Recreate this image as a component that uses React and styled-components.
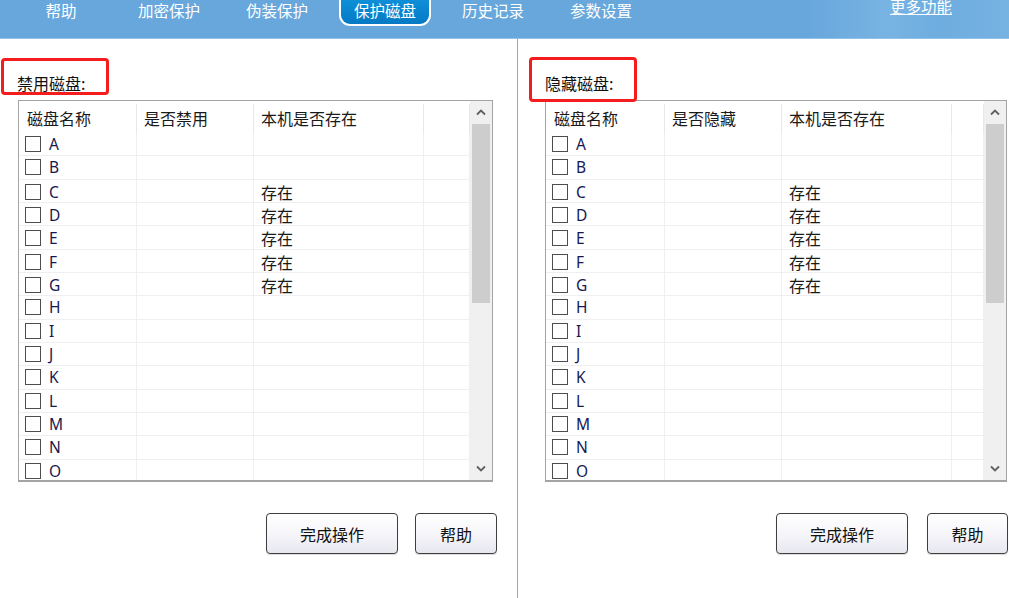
import React from "react";
import styled, { createGlobalStyle } from "styled-components";

const Global = createGlobalStyle`
  html, body { margin: 0; padding: 0; background: #fff; }
  body { font-family: "Noto Sans CJK SC", "Noto Sans", sans-serif; }
  * { box-sizing: border-box; }
`;

const Root = styled.div`
  width: 1009px;
  height: 598px;
  display: flex;
  flex-direction: column;
  overflow: hidden;
  background: #fff;
`;

const TopBar = styled.div`
  height: 39px;
  flex: none;
  display: flex;
  align-items: flex-start;
  padding-left: 7px;
  background: linear-gradient(90deg, #68a7dc 0%, #68a7dc 80%, #78b4e3 88%, #6eaddf 93%, #76b2e2 100%);
  border-bottom: 1px solid #93c2e8;
`;

const NavItem = styled.div`
  width: 108px;
  display: flex;
  justify-content: center;
`;

const NavLabel = styled.span`
  color: #fff;
  font-size: 15.5px;
  line-height: 20px;
  white-space: nowrap;
  ${(p) =>
    p.$active
      ? `
    padding: 0 13px 4px;
    background: linear-gradient(180deg, #0e8fd8 0%, #0579c4 100%);
    border: 2px solid #fff;
    border-top: none;
    border-radius: 0 0 11px 11px;
  `
      : ""}
`;

const MoreLink = styled.span`
  margin-left: auto;
  margin-right: 57px;
  margin-top: -4px;
  color: #fff;
  font-size: 15.5px;
  line-height: 20px;
  text-decoration: underline;
  text-underline-offset: 1px;
`;

const Main = styled.div`
  flex: 1;
  display: flex;
`;

const Panel = styled.div`
  position: relative;
  width: ${(p) => p.$width};
  flex: none;
  display: flex;
  flex-direction: column;
  padding-top: 34px;
  padding-left: ${(p) => p.$padLeft}px;
  border-right: ${(p) => (p.$divider ? "1px solid #a5a5a5" : "none")};
`;

const Highlight = styled.div`
  position: absolute;
  left: ${(p) => p.$left}px;
  top: ${(p) => p.$top}px;
  width: 108px;
  height: ${(p) => p.$height}px;
  border: 3px solid #f41c1c;
  border-radius: 4px;
  pointer-events: none;
`;

const SectionLabel = styled.div`
  font-size: 16px;
  line-height: 20px;
  color: #111;
  height: 20px;
  margin-bottom: 7px;
  margin-left: ${(p) => p.$shift || 0}px;
`;

const TableBox = styled.div`
  width: ${(p) => p.$width}px;
  height: 382px;
  border: 1px solid #a3a3a3;
  border-bottom-width: 2px;
  display: flex;
  overflow: hidden;
`;

const TableBody = styled.div`
  flex: 1;
  overflow: hidden;
`;

const Row = styled.div`
  display: grid;
  grid-template-columns: ${(p) => p.$cols};
  height: ${(p) => (p.$header ? "32px" : "23.33px")};
  border-bottom: ${(p) => (p.$header ? "none" : "1px solid #efefef")};
`;

const HeadCell = styled.div`
  display: flex;
  align-items: center;
  padding-left: ${(p) => p.$pad || 7}px;
  padding-top: 2px;
  font-size: 16px;
  color: #1a1a1a;
  position: relative;
  &::after {
    content: "";
    position: absolute;
    right: 0;
    top: 3px;
    bottom: 0;
    width: 1px;
    background: #e8e8e8;
  }
`;

const Cell = styled.div`
  display: flex;
  align-items: center;
  padding-left: ${(p) => p.$pad || 7}px;
  border-right: 1px solid #efefef;
  font-size: 16px;
  color: #1a1a1a;
  gap: 8px;
`;

const Check = styled.span`
  width: 16px;
  height: 16px;
  border: 1.5px solid #4d4d4d;
  background: #fff;
  flex: none;
`;

const Letter = styled.span`
  font-family: "Noto Sans", "Open Sans", sans-serif;
  font-size: 15.5px;
  color: #181850;
`;

const ScrollBar = styled.div`
  width: 22px;
  flex: none;
  background: #f0f0f0;
  display: flex;
  flex-direction: column;
  align-items: center;
`;

const ScrollArrow = styled.div`
  height: 23px;
  width: 100%;
  display: flex;
  align-items: center;
  justify-content: center;
  flex: none;
`;

const Thumb = styled.div`
  width: 18px;
  height: 179px;
  background: #cdcdcd;
  flex: none;
`;

const Spacer = styled.div`
  flex: 1;
`;

const ButtonRow = styled.div`
  display: flex;
  gap: ${(p) => p.$gap}px;
  margin-top: 31px;
  padding-left: ${(p) => p.$offset}px;
`;

const Button = styled.button`
  width: ${(p) => p.$w}px;
  height: 41px;
  border: 1px solid #3e3e3e;
  border-radius: 4px;
  background: linear-gradient(180deg, #ffffff 0%, #f6f6fa 50%, #e7e7ef 100%);
  font-family: "Noto Sans CJK SC", sans-serif;
  font-size: 16px;
  color: #111;
  padding: 0;
  box-shadow: 0 1px 1px rgba(0, 0, 0, 0.15);
`;

const Chevron = ({ down }) => (
  <svg width="10" height="7" viewBox="0 0 10 7">
    <path
      d={down ? "M1 1.5 L5 5.5 L9 1.5" : "M1 5.5 L5 1.5 L9 5.5"}
      fill="none"
      stroke="#606060"
      strokeWidth="1.8"
    />
  </svg>
);

const LETTERS = "ABCDEFGHIJKLMNO".split("");
const EXISTS = new Set(["C", "D", "E", "F", "G"]);

function DiskTable({ width, cols, flagTitle, firstPad }) {
  return (
    <TableBox $width={width}>
      <TableBody>
        <Row $header $cols={cols}>
          <HeadCell $pad={firstPad + 2}>磁盘名称</HeadCell>
          <HeadCell>{flagTitle}</HeadCell>
          <HeadCell>本机是否存在</HeadCell>
          <HeadCell />
        </Row>
        {LETTERS.map((l) => (
          <Row key={l} $cols={cols}>
            <Cell $pad={firstPad}>
              <Check />
              <Letter>{l}</Letter>
            </Cell>
            <Cell />
            <Cell>{EXISTS.has(l) ? "存在" : ""}</Cell>
            <Cell />
          </Row>
        ))}
      </TableBody>
      <ScrollBar>
        <ScrollArrow>
          <Chevron />
        </ScrollArrow>
        <Thumb />
        <Spacer />
        <ScrollArrow>
          <Chevron down />
        </ScrollArrow>
      </ScrollBar>
    </TableBox>
  );
}

const NAV = ["帮助", "加密保护", "伪装保护", "保护磁盘", "历史记录", "参数设置"];

export default function App() {
  return (
    <Root>
      <Global />
      <TopBar>
        {NAV.map((n) => (
          <NavItem key={n}>
            <NavLabel $active={n === "保护磁盘"}>{n}</NavLabel>
          </NavItem>
        ))}
        <MoreLink>更多功能</MoreLink>
      </TopBar>
      <Main>
        <Panel $width="518px" $padLeft={18} $divider>
          <Highlight $left={1} $top={19} $height={37} />
          <SectionLabel $shift={-1}>禁用磁盘:</SectionLabel>
          <DiskTable width={475} cols="118px 117px 170px 1fr" flagTitle="是否禁用" firstPad={6} />
          <ButtonRow $offset={248} $gap={17}>
            <Button $w={132}>完成操作</Button>
            <Button $w={82}>帮助</Button>
          </ButtonRow>
        </Panel>
        <Panel $width="491px" $padLeft={27}>
          <Highlight $left={11} $top={18} $height={45} />
          <SectionLabel>隐藏磁盘:</SectionLabel>
          <DiskTable width={462} cols="119px 117px 170px 1fr" flagTitle="是否隐藏" firstPad={6} />
          <ButtonRow $offset={231} $gap={19}>
            <Button $w={132}>完成操作</Button>
            <Button $w={81}>帮助</Button>
          </ButtonRow>
        </Panel>
      </Main>
    </Root>
  );
}
